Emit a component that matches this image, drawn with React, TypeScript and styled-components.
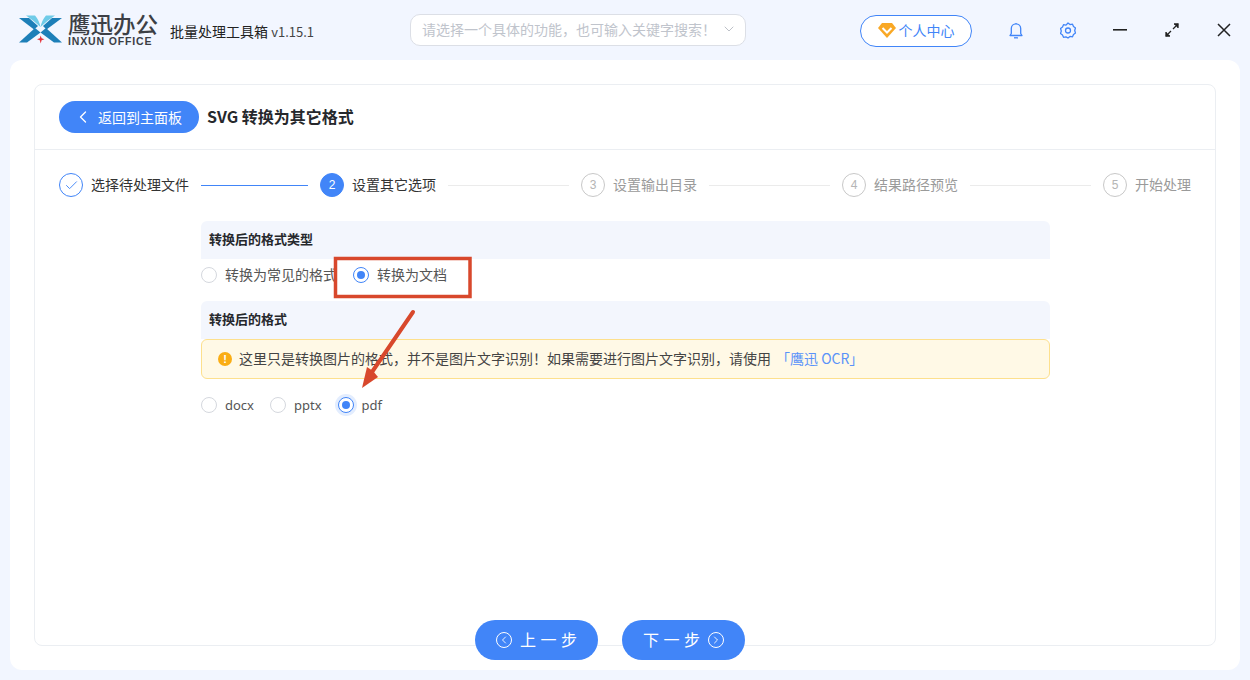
import { ChevronDown, ChevronLeft, ChevronRight, Check } from "lucide-react";
import styled, { createGlobalStyle } from "styled-components";

const GlobalStyle = createGlobalStyle`
  html, body {
    margin: 0;
    padding: 0;
    background: #f2f6ff;
    font-family: "Noto Sans CJK SC", "Noto Sans", sans-serif;
  }
  * {
    box-sizing: border-box;
  }
`;

const Page = styled.div`
  width: 1250px;
  height: 680px;
  position: relative;
  overflow: hidden;
  display: flex;
  flex-direction: column;
  background: #f2f6ff;
`;

const TopBar = styled.header`
  height: 60px;
  flex-shrink: 0;
  display: flex;
  align-items: center;
  padding-left: 18px;
`;
const Logo = styled.div`
  width: 44px;
  height: 32px;
  margin-right: 6px;
  margin-top: 1px;
`;
const BrandText = styled.div`
  width: 92px;
  display: flex;
  flex-direction: column;
  margin-right: 10px;
  margin-top: -3px;
`;
const BrandName = styled.span`
  font-size: 22.5px;
  line-height: 24px;
  font-weight: 500;
  color: #3c3f45;
  white-space: nowrap;
`;
const BrandSub = styled.span`
  font-family: "Liberation Sans", sans-serif;
  font-size: 10.5px;
  line-height: 12px;
  font-weight: 700;
  color: #3c3f45;
  letter-spacing: 0.85px;
  white-space: nowrap;
`;
const AppTitle = styled.span`
  width: 240px;
  margin-top: 2px;
  font-size: 14px;
  color: #222;
  white-space: nowrap;
`;
const Version = styled.span`
  color: #444;
  font-size: 13px;
`;
const Search = styled.div`
  width: 336px;
  height: 32px;
  margin-top: -1px;
  padding: 0 8px 1px 11px;
  display: flex;
  align-items: center;
  justify-content: space-between;
  background: #fff;
  border: 1px solid #dcdfe6;
  border-radius: 10px;
  color: #c0c4cc;
  font-size: 14px;
`;
const ProfileButton = styled.div`
  width: 112px;
  height: 32px;
  margin-left: 114px;
  margin-top: 1px;
  padding-bottom: 1px;
  display: flex;
  align-items: center;
  justify-content: center;
  gap: 3px;
  background: #fff;
  border: 1px solid #4185f8;
  border-radius: 16px;
  color: #4185f8;
  font-size: 14px;
`;
const WindowIcons = styled.div`
  display: flex;
  align-items: center;
  margin-left: 34px;
  gap: 32px;
`;
const IconSlot = styled.div`
  width: 20px;
  height: 20px;
  display: flex;
  align-items: center;
  justify-content: center;
`;

const Panel = styled.main`
  margin: 0 10px 10px;
  flex: 1;
  padding: 24px;
  background: #fff;
  border-radius: 12px;
  display: flex;
`;
const Card = styled.section`
  flex: 1;
  border: 1px solid #ebeef2;
  border-radius: 8px;
  display: flex;
  flex-direction: column;
`;
const CardHeader = styled.div`
  height: 65px;
  flex-shrink: 0;
  padding: 0 24px;
  display: flex;
  align-items: center;
  gap: 8px;
  border-bottom: 1px solid #ebeef2;
`;
const BackButton = styled.div`
  width: 140px;
  height: 32px;
  padding: 0 0 1px 14px;
  display: flex;
  align-items: center;
  gap: 5px;
  background: #4185f8;
  border-radius: 16px;
  color: #fff;
  font-size: 14px;
`;
const PageTitle = styled.h1`
  margin: 0;
  padding-bottom: 2px;
  font-size: 16px;
  font-weight: 700;
  color: #26282c;
`;

const Steps = styled.div`
  display: grid;
  grid-template-columns: repeat(4, 261px) auto;
  padding: 23px 24px 0;
  height: 71px;
  flex-shrink: 0;
`;
const Step = styled.div`
  display: flex;
  align-items: center;
  height: 24px;
`;
const StepCircle = styled.div<{ $state: "done" | "active" | "todo" }>`
  width: 24px;
  height: 24px;
  flex-shrink: 0;
  border-radius: 50%;
  display: flex;
  align-items: center;
  justify-content: center;
  font-size: 12px;
  font-family: "Liberation Sans", sans-serif;
  border: 1px solid ${(p) => (p.$state === "todo" ? "#c8c8c8" : "#4185f8")};
  background: ${(p) => (p.$state === "active" ? "#4185f8" : "#fff")};
  color: ${(p) => (p.$state === "active" ? "#fff" : "#b5b5b5")};
`;
const StepLabel = styled.span<{ $muted: boolean }>`
  margin-left: 8px;
  padding-bottom: 2px;
  font-size: 14px;
  white-space: nowrap;
  color: ${(p) => (p.$muted ? "#9a9a9a" : "#333")};
`;
const StepLine = styled.div<{ $done: boolean }>`
  flex: 1;
  height: 1px;
  margin: 0 12px;
  background: ${(p) => (p.$done ? "#4185f8" : "#ebebeb")};
`;

const Form = styled.div`
  width: 849px;
  margin-left: 166px;
  display: flex;
  flex-direction: column;
`;
const SectionTitle = styled.div`
  height: 38px;
  padding: 0 0 3px 8px;
  display: flex;
  align-items: center;
  background: #f3f6fd;
  border-radius: 6px 6px 0 0;
  font-size: 13px;
  font-weight: 700;
  color: #26282c;
`;
const TypeRow = styled.div`
  height: 42px;
  padding-bottom: 10px;
  display: flex;
  align-items: center;
  gap: 16px;
`;
const FormatRow = styled.div`
  height: 52px;
  display: flex;
  align-items: center;
  gap: 16px;
`;
const RadioItem = styled.label`
  display: flex;
  align-items: center;
  gap: 8px;
  font-size: 14px;
  color: #555;
`;
const RadioLabel = styled.span`
  padding-bottom: 2px;
`;
const RadioDot = styled.span<{ $checked?: boolean; $focus?: boolean }>`
  width: 16px;
  height: 16px;
  border-radius: 50%;
  flex-shrink: 0;
  display: flex;
  align-items: center;
  justify-content: center;
  background: #fff;
  border: 1px solid ${(p) => (p.$checked ? "#4185f8" : "#d5d8de")};
  box-shadow: ${(p) => (p.$focus ? "0 0 0 3px #e3edfe" : "none")};
  &::after {
    content: "";
    width: 8px;
    height: 8px;
    border-radius: 50%;
    background: ${(p) => (p.$checked ? "#4185f8" : "transparent")};
  }
`;
const OptionText = styled.span`
  font-family: "Noto Sans", sans-serif;
  font-size: 13px;
`;
const Notice = styled.div`
  height: 40px;
  padding: 0 0 2px 16px;
  display: flex;
  align-items: center;
  gap: 7px;
  background: #fff9e6;
  border: 1px solid #fde08d;
  border-radius: 6px;
  font-size: 14px;
  color: #444;
  white-space: nowrap;
`;
const NoticeIcon = styled.span`
  width: 14px;
  height: 14px;
  margin-top: 2px;
  border-radius: 50%;
  background: #faad14;
  color: #fff;
  font-family: "Liberation Sans", sans-serif;
  font-size: 11px;
  font-weight: 700;
  line-height: 14px;
  text-align: center;
`;
const NoticeLink = styled.span`
  color: #5a93f9;
  margin-left: 5px;
`;

const Footer = styled.div`
  position: absolute;
  left: 475px;
  top: 620px;
  display: flex;
  gap: 24px;
`;
const StepButton = styled.div`
  width: 123px;
  height: 40px;
  display: flex;
  align-items: center;
  justify-content: center;
  gap: 8px;
  background: #4185f8;
  border-radius: 20px;
  color: #fff;
  font-size: 16px;
`;
const StepButtonText = styled.span`
  letter-spacing: 4.5px;
  margin-right: -4.5px;
  padding-bottom: 2px;
`;
const RoundIcon = styled.span`
  width: 16px;
  height: 16px;
  border: 1px solid #fff;
  border-radius: 50%;
  display: flex;
  align-items: center;
  justify-content: center;
`;

const Annotation = styled.svg`
  position: absolute;
  left: 0;
  top: 0;
  pointer-events: none;
`;

const steps = ["选择待处理文件", "设置其它选项", "设置输出目录", "结果路径预览", "开始处理"];

const App = () => {
  return (
    <Page>
      <GlobalStyle />
      <TopBar>
        <Logo>
          <svg width="44" height="32" viewBox="0 0 44 32">
            <path d="M1 3H11L20 11L16 14.500Z" fill="#1d7fb8" />
            <path d="M44 3H34L25 11L28.500 14.500Z" fill="#1d7fb8" />
            <path d="M1 27.500L17 13L22.500 17.500L9 27.500Z" fill="#1d7fb8" />
            <path d="M44 27.500L28 13L22.500 17.500L36 27.500Z" fill="#1d7fb8" />
            <path d="M8 .5H17Q21 5 22.500 12Q15 5 8 .5Z" fill="#6fcbe8" />
            <path d="M37 .5H28Q24 5 22.500 12Q30 5 37 .5Z" fill="#6fcbe8" />
            <path d="M22.700 20.500L23.600 23.300L26.500 24.300L23.600 25.300L22.700 28.500L21.800 25.300L19 24.300L21.800 23.300Z" fill="#e5343a" />
          </svg>
        </Logo>
        <BrandText>
          <BrandName>鹰迅办公</BrandName>
          <BrandSub>INXUN OFFICE</BrandSub>
        </BrandText>
        <AppTitle>
          批量处理工具箱 <Version>v1.15.1</Version>
        </AppTitle>
        <Search>
          <span>请选择一个具体的功能，也可输入关键字搜索！</span>
          <ChevronDown size={16} color="#b8bcc4" strokeWidth={1.4} />
        </Search>
        <ProfileButton>
          <svg width="18" height="16" viewBox="0 0 18 16">
            <path d="M4 1h10l4 5-9 10L0 6z" fill="#f9a825" />
            <path d="M4.500 6l4.500 4.500L13.500 6" fill="none" stroke="#fff" strokeWidth="2" />
          </svg>
          个人中心
        </ProfileButton>
        <WindowIcons>
          <IconSlot>
            <svg width="14" height="17" viewBox="0 0 14 17" fill="none" stroke="#4185f8" strokeWidth="1.3">
              <path d="M1 13.500h12l-1.300-2V6.500a4.700 4.700 0 0 0-9.400 0v5z" strokeLinejoin="round" />
              <path d="M5 15.800h4" />
              <path d="M7 1.800V1" />
            </svg>
          </IconSlot>
          <IconSlot>
            <svg width="16" height="17" viewBox="0 0 16 17" fill="none" stroke="#4185f8" strokeWidth="1.3">
              <path d="M8 1l2 1.600 2.500-.4 1 2.300 2 1.500-.8 2.500.8 2.500-2 1.500-1 2.300-2.500-.4L8 16l-2-1.100-2.500.4-1-2.300-2-1.500.8-2.500-.8-2.500 2-1.500 1-2.300 2.500.4z" strokeLinejoin="round" />
              <circle cx="8" cy="8.500" r="2.500" />
            </svg>
          </IconSlot>
          <IconSlot>
            <svg width="14" height="2" viewBox="0 0 14 2">
              <rect width="14" height="1.600" fill="#222" />
            </svg>
          </IconSlot>
          <IconSlot>
            <svg width="14" height="14" viewBox="0 0 14 14" fill="none" stroke="#222" strokeWidth="1.300">
              <path d="M8 6l5-5M1 13l5-5" />
              <path d="M9 1h4v4" fill="#222" />
              <path d="M1 9v4h4" fill="#222" />
            </svg>
          </IconSlot>
          <IconSlot>
            <svg width="14" height="14" viewBox="0 0 14 14" stroke="#222" strokeWidth="1.500">
              <path d="M1 1l12 12M13 1L1 13" />
            </svg>
          </IconSlot>
        </WindowIcons>
      </TopBar>

      <Panel>
        <Card>
          <CardHeader>
            <BackButton>
              <ChevronLeft size={20} strokeWidth={1.6} />
              返回到主面板
            </BackButton>
            <PageTitle>SVG 转换为其它格式</PageTitle>
          </CardHeader>

          <Steps>
            {steps.map((label, index) => {
              const state = index === 0 ? "done" : index === 1 ? "active" : "todo";
              return (
                <Step key={label}>
                  <StepCircle $state={state}>
                    {index === 0 ? <Check size={15} color="#4185f8" strokeWidth={1.5} /> : index + 1}
                  </StepCircle>
                  <StepLabel $muted={index > 1}>{label}</StepLabel>
                  {index < steps.length - 1 && <StepLine $done={index === 0} />}
                </Step>
              );
            })}
          </Steps>

          <Form>
            <SectionTitle>转换后的格式类型</SectionTitle>
            <TypeRow>
              <RadioItem>
                <RadioDot />
                <RadioLabel>转换为常见的格式</RadioLabel>
              </RadioItem>
              <RadioItem>
                <RadioDot $checked />
                <RadioLabel>转换为文档</RadioLabel>
              </RadioItem>
            </TypeRow>
            <SectionTitle>转换后的格式</SectionTitle>
            <Notice>
              <NoticeIcon>!</NoticeIcon>
              <span>
                这里只是转换图片的格式，并不是图片文字识别！如果需要进行图片文字识别，请使用
                <NoticeLink>「鹰迅 OCR」</NoticeLink>
              </span>
            </Notice>
            <FormatRow>
              <RadioItem>
                <RadioDot />
                <OptionText>docx</OptionText>
              </RadioItem>
              <RadioItem>
                <RadioDot />
                <OptionText>pptx</OptionText>
              </RadioItem>
              <RadioItem>
                <RadioDot $checked $focus />
                <OptionText>pdf</OptionText>
              </RadioItem>
            </FormatRow>
          </Form>
        </Card>
      </Panel>

      <Footer>
        <StepButton>
          <RoundIcon>
            <ChevronLeft size={12} strokeWidth={1.8} />
          </RoundIcon>
          <StepButtonText>上一步</StepButtonText>
        </StepButton>
        <StepButton>
          <StepButtonText>下一步</StepButtonText>
          <RoundIcon>
            <ChevronRight size={12} strokeWidth={1.8} />
          </RoundIcon>
        </StepButton>
      </Footer>

      <Annotation width="1250" height="680" viewBox="0 0 1250 680">
        <rect x="335.500" y="258.500" width="134.500" height="38" fill="none" stroke="#d8482c" strokeWidth="3.500" />
        <path d="M413 312L372 372" stroke="#d8482c" strokeWidth="4" strokeLinecap="round" />
        <path d="M362 388L367 367L373 371L378 377z" fill="#d8482c" />
      </Annotation>
    </Page>
  );
};

export default App;
